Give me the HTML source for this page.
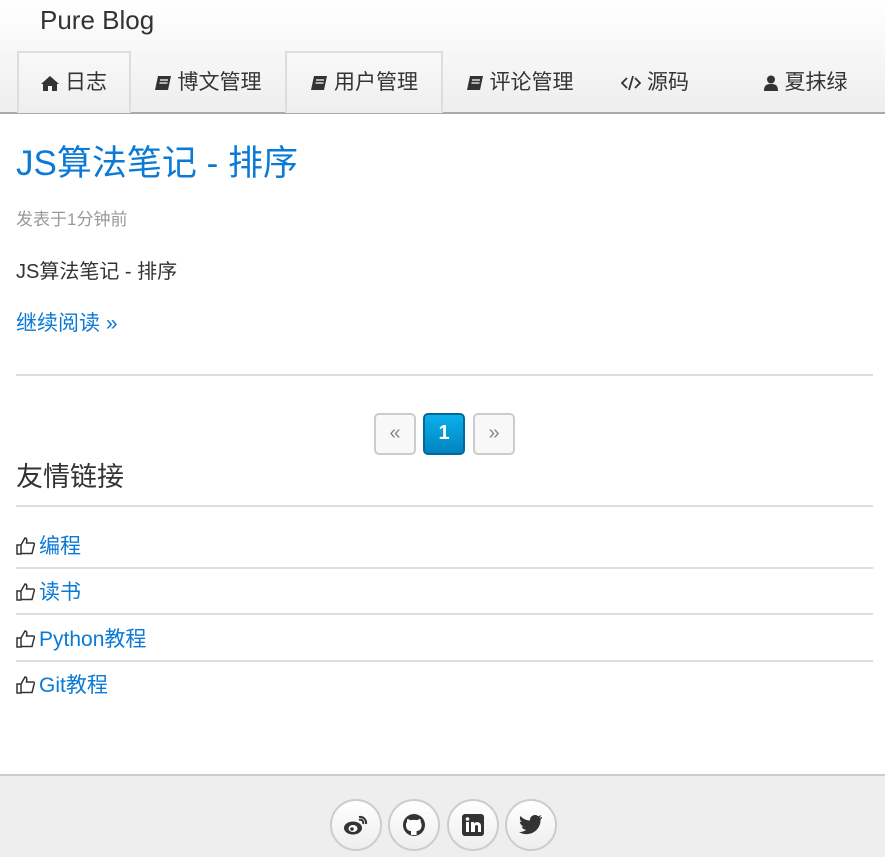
<!DOCTYPE html>
<html><head><meta charset="utf-8"><style>
*{box-sizing:border-box;margin:0;padding:0}
body{width:885px;height:857px;overflow:hidden;font-family:"Liberation Sans","Noto Sans CJK SC",sans-serif;color:#333;background:#fff;position:relative}
.hdr{position:absolute;left:0;top:0;width:885px;height:114px;background:linear-gradient(#fff,#eee);border-bottom:2px solid #aaa}
.brand{position:absolute;left:40px;top:5px;font-size:26px;color:#333}
.tab{position:absolute;top:51px;height:62px;line-height:64px;font-size:21px;color:#333;text-align:center}
.tab.b{border:2px solid #ddd;border-bottom:none;background:linear-gradient(#f9f9f9,#eee);line-height:60px}
.tab svg{vertical-align:-2px;margin-right:6px}
a{color:#0a7ad6;text-decoration:none}
.abs{position:absolute}
.hr{position:absolute;left:16px;width:857px;height:2px;background:#ddd}
.pg{position:absolute;top:413px;width:42px;height:42px;border:2px solid #ccc;border-radius:5px;background:#f8f8f8;color:#888;text-align:center;line-height:36px;font-size:20px}
.foot{position:absolute;left:0;top:774px;width:885px;height:83px;background:#eee;border-top:2px solid #ccc}
.c{position:absolute;top:23px;width:52px;height:52px;border-radius:50%;border:2px solid #ccc;background:linear-gradient(#fff,#eee);display:flex;align-items:center;justify-content:center}
.lk{position:absolute;left:16px;font-size:21px}
.lk svg{vertical-align:-2px;margin-right:4px}
</style></head><body>
<div class="hdr">
<div class="brand">Pure Blog</div>
<div class="tab b" style="left:17px;width:114px"><svg width="18" height="16" viewBox="0 0 18 16"><path d="M9 1L0 9h2v7h5v-5h4v5h5V9h2z" fill="#333"/></svg>日志</div>
<div class="tab" style="left:140px;width:135px"><svg width="18" height="16" viewBox="0 0 18 16"><path d="M4 1h13l-3 14H1z" fill="#333"/><path d="M6 5h8M5.5 8h8" stroke="#fff" stroke-width="1.3"/></svg>博文管理</div>
<div class="tab b" style="left:285px;width:158px"><svg width="18" height="16" viewBox="0 0 18 16"><path d="M4 1h13l-3 14H1z" fill="#333"/><path d="M6 5h8M5.5 8h8" stroke="#fff" stroke-width="1.3"/></svg>用户管理</div>
<div class="tab" style="left:452px;width:135px"><svg width="18" height="16" viewBox="0 0 18 16"><path d="M4 1h13l-3 14H1z" fill="#333"/><path d="M6 5h8M5.5 8h8" stroke="#fff" stroke-width="1.3"/></svg>评论管理</div>
<div class="tab" style="left:605px;width:100px"><svg width="20" height="16" viewBox="0 0 20 16"><path d="M6 3L1 8l5 5M14 3l5 5-5 5M12 1L8 15" stroke="#333" stroke-width="1.8" fill="none"/></svg>源码</div>
<div class="tab" style="left:745px;width:120px"><svg width="16" height="16" viewBox="0 0 16 16"><circle cx="8" cy="4.5" r="4" fill="#333"/><path d="M1 16c0-6 3-7 7-7s7 1 7 7z" fill="#333"/></svg>夏抹绿</div>
</div>
<a class="abs" style="left:16px;top:135px;font-size:35px">JS算法笔记 - 排序</a>
<div class="abs" style="left:16px;top:205px;font-size:17px;color:#999">发表于1分钟前</div>
<div class="abs" style="left:16px;top:255px;font-size:20px">JS算法笔记 - 排序</div>
<a class="abs" style="left:16px;top:307px;font-size:21px">继续阅读 »</a>
<div class="hr" style="top:374px"></div>
<div class="pg" style="left:374px">«</div>
<div class="pg" style="left:423px;background:linear-gradient(#0bb0ec,#0284c0);border-color:#03699a;color:#fff;font-weight:bold">1</div>
<div class="pg" style="left:473px">»</div>
<div class="abs" style="left:16px;top:455px;font-size:27px">友情链接</div>
<div class="hr" style="top:505px"></div>
<div class="lk" style="top:530px"><svg width="19" height="18" viewBox="0 0 19 18"><path d="M1 8h4v9H1zM5 8l4-7c2 0 2 2 1.5 5H17c1.5 0 2 1.5 1 2.5l-2 8H5" stroke="#333" stroke-width="1.5" fill="none"/></svg><a>编程</a></div>
<div class="hr" style="top:567px"></div>
<div class="lk" style="top:576px"><svg width="19" height="18" viewBox="0 0 19 18"><path d="M1 8h4v9H1zM5 8l4-7c2 0 2 2 1.5 5H17c1.5 0 2 1.5 1 2.5l-2 8H5" stroke="#333" stroke-width="1.5" fill="none"/></svg><a>读书</a></div>
<div class="hr" style="top:613px"></div>
<div class="lk" style="top:623px"><svg width="19" height="18" viewBox="0 0 19 18"><path d="M1 8h4v9H1zM5 8l4-7c2 0 2 2 1.5 5H17c1.5 0 2 1.5 1 2.5l-2 8H5" stroke="#333" stroke-width="1.5" fill="none"/></svg><a>Python教程</a></div>
<div class="hr" style="top:660px"></div>
<div class="lk" style="top:669px"><svg width="19" height="18" viewBox="0 0 19 18"><path d="M1 8h4v9H1zM5 8l4-7c2 0 2 2 1.5 5H17c1.5 0 2 1.5 1 2.5l-2 8H5" stroke="#333" stroke-width="1.5" fill="none"/></svg><a>Git教程</a></div>
<div class="foot">
<div class="c" style="left:330px"><svg width="26" height="22" viewBox="0 0 26 22"><ellipse cx="10" cy="14" rx="9" ry="6.5" fill="#333"/><ellipse cx="10" cy="14.5" rx="4.5" ry="3.5" fill="#fff"/><circle cx="9" cy="15" r="1.8" fill="#333"/><path d="M16 3a6 6 0 0 1 7 7M16 6a3 3 0 0 1 4 4" stroke="#333" stroke-width="2" fill="none"/></svg></div>
<div class="c" style="left:388px"><svg width="24" height="24" viewBox="0 0 24 24"><circle cx="12" cy="12" r="11" fill="#333"/><path d="M9 22v-4c-3 0-5-2-5-6 0-1.5.5-2.5 1-3-.2-1 0-2 .3-3 1 0 2 .5 3 1.2 2-.5 5-.5 7 0 1-.7 2-1.2 3-1.2.3 1 .5 2 .3 3 .5.5 1 1.5 1 3 0 4-2 6-5 6v4z" fill="#fff"/></svg></div>
<div class="c" style="left:447px"><svg width="22" height="22" viewBox="0 0 22 22"><rect width="22" height="22" rx="3" fill="#333"/><rect x="4" y="8" width="3" height="10" fill="#fff"/><circle cx="5.5" cy="5" r="1.8" fill="#fff"/><path d="M9 8h3v1.5c1-2 7-2.5 7 2.5v6h-3v-5.5c0-2-3-2-3 0V18H9z" fill="#fff"/></svg></div>
<div class="c" style="left:505px"><svg width="24" height="20" viewBox="0 0 24 20"><path d="M23 2c-1 .5-2 .7-3 .8 1-.6 2-1.6 2.2-2.8-1 .6-2 1-3 1.2A5 5 0 0 0 11 5.5C7 5.3 3.5 3.5 1.5 1 .3 3 1 5.7 3 7c-.8 0-1.6-.3-2.2-.6 0 2.4 1.7 4.4 4 4.9-.7.2-1.5.2-2.2.1.6 2 2.5 3.4 4.6 3.4A10 10 0 0 1 0 17a14 14 0 0 0 21.5-12.5c1-.7 1.8-1.5 1.5-2.5z" fill="#333"/></svg></div>
</div>
</body></html>
